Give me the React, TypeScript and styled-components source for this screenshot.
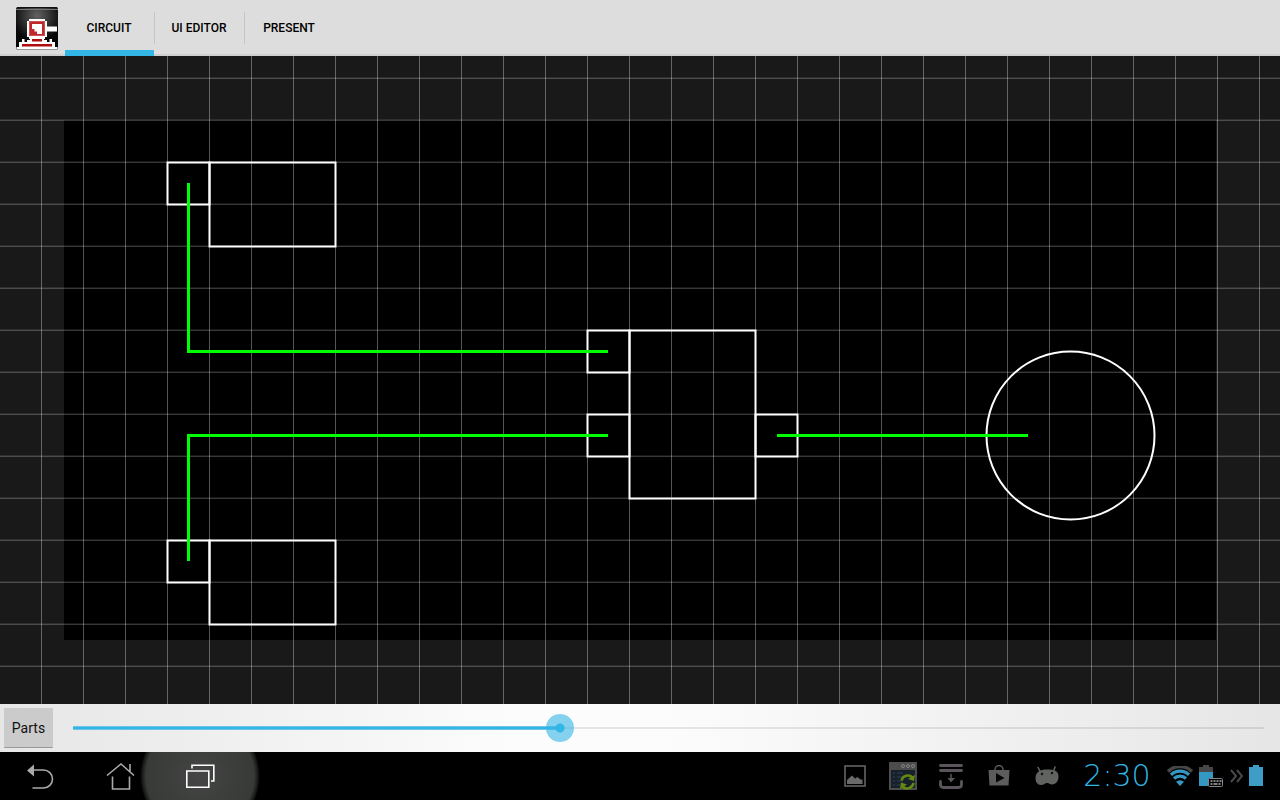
import React, { useState } from "react";
import styled, { createGlobalStyle } from "styled-components";

const GlobalStyle = createGlobalStyle`
  *, *::before, *::after { box-sizing: border-box; }
  body { margin: 0; background: #000; font-family: Roboto, "Liberation Sans", sans-serif; }
  button { font: inherit; border: 0; padding: 0; background: none; cursor: pointer; }
  svg { display: block; }
`;

const Screen = styled.div`
  display: flex;
  flex-direction: column;
  min-height: 100vh;
`;

const ActionBar = styled.header`
  display: flex;
  align-items: stretch;
  height: 56px;
  padding-left: 16px;
  background: linear-gradient(#cfcfcf, #cfcfcf) bottom / 100% 2px no-repeat #dddddd;
`;

const Logo = styled.div`
  display: flex;
  align-items: center;
  width: 49px;
`;

const Tabs = styled.nav`
  display: flex;
`;

const Tab = styled.button<{ $active?: boolean }>`
  position: relative;
  width: 90px;
  padding-right: 2px;
  color: #000;
  font-size: 12px;
  font-weight: 500;
  line-height: 16px;
  background: linear-gradient(#c6c6c6, #c6c6c6) right 12px / 1px 32px no-repeat;

  &:last-child { background: none; }

  &::after {
    content: "";
    display: ${(p) => (p.$active ? "block" : "none")};
    position: absolute;
    left: 0;
    right: 1px;
    bottom: 0;
    height: 6px;
    background: #33b5e5;
  }
`;

const Workspace = styled.main`
  position: relative;
  display: flex;
  flex: 1;
  min-height: 600px;
  padding: 64px;
  background: #191919;
`;

const Board = styled.div`
  flex: 1;
  background: #000;
`;

const Drawing = styled.svg`
  position: absolute;
  inset: 0;
  width: 100%;
  height: 100%;
`;

const ControlBar = styled.div`
  display: flex;
  align-items: center;
  height: 48px;
  padding: 0 2px 0 4px;
  gap: 6px;
  background: linear-gradient(90deg, #e6e6e6, #fcfcfc 40%, #fcfcfc 52%, #e6e6e6);
`;

const PartsButton = styled.button`
  width: 49px;
  height: 40px;
  color: #111;
  font-size: 14px;
  line-height: 20px;
  background: #cbcbcb;
  border-bottom: 1px solid #999;
  border-radius: 1px;
`;

const Slider = styled.input`
  flex: 1;
  min-width: 0;
  height: 28px;
  margin: 0;
  appearance: none;
  background: none;

  &::-webkit-slider-runnable-track {
    height: 28px;
    background:
      linear-gradient(#6cc5e8 1px, #33b5e5 1px, #33b5e5 3px, #6cc5e8 3px) 14px 12px / calc((100% - 28px) * var(--filled)) 4px no-repeat,
      linear-gradient(rgba(0, 0, 0, 0.09), rgba(0, 0, 0, 0.09)) 14px 13px / calc(100% - 28px) 2px no-repeat;
  }

  &::-webkit-slider-thumb {
    appearance: none;
    width: 28px;
    height: 28px;
    border-radius: 50%;
    background: radial-gradient(circle, #33b5e5 4px, rgba(51, 181, 229, 0.6) 5px);
  }
`;

const SystemBar = styled.footer`
  display: flex;
  justify-content: space-between;
  height: 48px;
  overflow: hidden;
  background: #000;
`;

const NavKeys = styled.nav`
  display: flex;
`;

const NavKey = styled.button<{ $pressed?: boolean }>`
  position: relative;
  display: flex;
  align-items: center;
  justify-content: center;
  width: 80px;

  &::before {
    content: "";
    display: ${(p) => (p.$pressed ? "block" : "none")};
    position: absolute;
    left: -20px;
    top: -36px;
    width: 120px;
    height: 120px;
    border-radius: 50%;
    background: radial-gradient(circle, #454545 0, #3e403e 24px, #383a38 54px, #181818 58px, #000 60px);
  }

  svg { position: relative; }
`;

const Status = styled.div`
  display: flex;
  align-items: center;
  padding-right: 17px;
`;

const Notices = styled.div`
  display: flex;
`;

const Notice = styled.div`
  display: flex;
  align-items: center;
  justify-content: center;
  width: 48px;
  height: 48px;
`;

const Clock = styled.time`
  width: 92px;
  color: #33b5e5;
  text-align: center;
  font-family: "DejaVu Sans", sans-serif;
  font-size: 30px;
  font-weight: 200;
  line-height: 48px;
`;

const Indicators = styled.div`
  display: flex;
  align-items: center;
  gap: 6px;
  padding-left: 4px;
`;

const LogoIcon = () => (
  <svg width="42" height="43" viewBox="0 0 42 43" aria-hidden="true">
    <defs>
      <radialGradient id="logoGlow" cx="0.5" cy="0.2" r="0.6">
        <stop offset="0" stopColor="#626262" />
        <stop offset="1" stopColor="#060606" />
      </radialGradient>
    </defs>
    <rect width="42" height="43" rx="2" fill="url(#logoGlow)" />
    <path d="M0 2.500h42" stroke="#777" />
    <path d="M1 .5h40" stroke="#111" />
    <g fill="#fff">
      <path d="M31 19.500h10v5H31z" />
      <path d="M13 12h16v2h2v16h-2v2H13v-2h-2V14h2z" />
      <path d="M14 31h14v2h3v2h2.500v-3H36v3h3v5h2.500v2.500H.5V40H3v-5h3v-3h2.500v3H11v-2h3z" />
    </g>
    <path fill="#c0282b" d="M13 14h16v15H13z" />
    <path fill="none" stroke="#cc5255" d="M13.500 14.500h15v14h-15z" />
    <path fill="#fff" d="M16 17h10v10h-5v-2.500h-2.500V22H16z" />
    <path fill="#b00d10" d="M16 32h10v2.500H16zM6 37h30v2.500H6z" />
    <path d="M1 42.500h40" stroke="#999" />
  </svg>
);

const BackIcon = () => (
  <svg width="28" height="28" viewBox="0 0 28 28" fill="none" stroke="#a9aba9" strokeWidth="1.600" aria-hidden="true">
    <path d="M7 8h10.500a9 9 0 0 1 0 18H6.500" />
    <path d="M1 8.500 8 2.500v12z" fill="#a9aba9" stroke="none" />
  </svg>
);

const HomeIcon = () => (
  <svg width="30" height="28" viewBox="0 0 30 28" fill="none" stroke="#a9aba9" strokeWidth="1.600" aria-hidden="true">
    <path d="M2 13.500 16 2l13 11.500M25 9.500V2M7.500 14.500V27h17V14.500" />
  </svg>
);

const RecentsIcon = () => (
  <svg width="30" height="26" viewBox="0 0 30 26" fill="none" stroke="#fff" strokeWidth="1.600" aria-hidden="true">
    <path d="M1.800 8h22v16.300h-22zM7 5.500V2.200h21.800V18H26" />
  </svg>
);

const PhotoNotice = () => (
  <svg width="22" height="22" viewBox="0 0 22 22" aria-hidden="true">
    <path fill="none" stroke="#6a6a6a" strokeWidth="1.500" d="M1 1h20v20H1z" />
    <path fill="#6a6a6a" d="M3 19v-4l5-4.500 3 3 2.500-1.500 3 2.500h2V19z" />
  </svg>
);

const SyncNotice = () => (
  <svg width="28" height="28" viewBox="0 0 28 28" aria-hidden="true">
    <path fill="#4c4c4c" d="M0 0h28v28H0z" />
    <path fill="#18202a" d="M2 8h24v18H2z" />
    <g fill="none" stroke="#858585">
      <circle cx="14" cy="4" r="1.500" />
      <circle cx="19" cy="4" r="1.500" />
      <circle cx="24" cy="4" r="1.500" />
    </g>
    <path stroke="#2c4258" strokeDasharray="2 2 6 20" d="M4 11h18M4 15h18M4 19h18M4 23h18" />
    <g fill="none" stroke="#658a12" strokeWidth="2.500">
      <path d="M12.500 18.500a6.500 6.500 0 0 1 11-3M24.500 21a6.500 6.500 0 0 1-11 3.500" />
    </g>
    <path fill="#658a12" d="m26 13-1 6-6-2zM11 27l1-6.500 6 2z" />
  </svg>
);

const DownloadNotice = () => (
  <svg width="24" height="26" viewBox="0 0 24 26" fill="none" stroke="#5a555a" strokeWidth="2.800" strokeLinecap="round" aria-hidden="true">
    <path d="M1.500 2.500h21M1.500 7.500h21M1.500 18.500v3q0 3 3 3h15q3 0 3-3v-3" />
    <path strokeWidth="1.500" d="M12 11.500v5" />
    <path fill="#5a555a" stroke="none" d="M8.500 15h7.500l-4 4.500z" />
  </svg>
);

const StoreNotice = () => (
  <svg width="22" height="22" viewBox="0 0 22 22" aria-hidden="true">
    <path fill="none" stroke="#666" strokeWidth="1.300" d="M7 6V4.500a4 4 0 0 1 8 0V6" />
    <path fill="#5c5c5c" d="M.5 5h21l-1 15.500h-19z" />
    <path fill="#050505" d="m8 8 8.500 5L8 17.500z" />
  </svg>
);

const DroidNotice = () => (
  <svg width="24" height="20" viewBox="0 0 24 20" aria-hidden="true">
    <path stroke="#676767" strokeWidth="1.500" strokeLinecap="round" d="m5 5-2-3.500M19 4l1-3" />
    <path fill="#606360" d="M.5 12C.5 6 5 3.500 12 3.500s11.500 1 11.500 7c0 5-3 8-6.500 8-2 0-3-1.500-5-1.500s-3 2-6 2c-3.500 0-5.500-3-5.500-7z" />
    <circle cx="7" cy="8" r="1.200" fill="#111" />
    <circle cx="17" cy="7" r="1.200" fill="#111" />
  </svg>
);

const WifiIcon = () => (
  <svg width="26" height="20" viewBox="0 0 26 20" fill="none" aria-hidden="true">
    <path stroke="#474747" strokeWidth="3.500" d="M1 5.500a17 17 0 0 1 24 0" />
    <g stroke="#3498c2" strokeWidth="3.200">
      <path d="M4 8.800a13 13 0 0 1 18 0" />
      <path d="M7 12.500a9 9 0 0 1 12 0" />
    </g>
    <path fill="#3498c2" d="M9 15.800q4-3 8 0L13 20z" />
  </svg>
);

const DockBatteryIcon = () => (
  <svg width="25" height="22" viewBox="0 0 25 22" aria-hidden="true">
    <path fill="#474747" d="M0 2h4V0h6v2h4v5H0z" />
    <path fill="#3498c2" d="M0 7h14v14H0z" />
    <rect x="9.500" y="13.500" width="14" height="8" rx="1" fill="#000" stroke="#85858f" />
    <path stroke="#aaa" strokeWidth="1.500" strokeDasharray="2 1" d="M11.500 16h11" />
    <path stroke="#aaa" strokeWidth="1.500" d="M11.500 19h2M14.500 19h4M19.500 19h2" />
  </svg>
);

const ChevronsIcon = () => (
  <svg width="13" height="14" viewBox="0 0 13 14" fill="none" stroke="#484848" strokeWidth="2" aria-hidden="true">
    <path d="m1 1 5 6-5 6M7 1l5 6-5 6" />
  </svg>
);

const BatteryIcon = () => (
  <svg width="14" height="22" viewBox="0 0 14 22" aria-hidden="true">
    <path fill="#3d9dc6" d="M0 2h4V0h6v2h4v19H0z" />
  </svg>
);

const TABS = ["CIRCUIT", "UI EDITOR", "PRESENT"];

const CircuitDrawing = () => (
  <Drawing role="img" aria-label="Circuit">
    <defs>
      <pattern id="grid" width="42" height="42" x="41" y="21" patternUnits="userSpaceOnUse">
        <path fill="#fff" fillOpacity="0.09" d="M0 0h42v1H0z" />
        <path fill="#fff" fillOpacity="0.22" d="M0 1h42v1H0z" />
        <path fill="#fff" fillOpacity="0.33" d="M0 0h1v42H0z" />
      </pattern>
    </defs>
    <rect width="100%" height="100%" fill="url(#grid)" />
    <g fill="none" stroke="#fff" strokeWidth="2">
      <rect x="167.500" y="106.500" width="42" height="42" />
      <rect x="209.500" y="106.500" width="126" height="84" />
      <rect x="167.500" y="484.500" width="42" height="42" />
      <rect x="209.500" y="484.500" width="126" height="84" />
      <rect x="587.500" y="274.500" width="42" height="42" />
      <rect x="587.500" y="358.500" width="42" height="42" />
      <rect x="629.500" y="274.500" width="126" height="168" />
      <rect x="755.500" y="358.500" width="42" height="42" />
      <circle cx="1070.500" cy="379.500" r="84" />
    </g>
    <g fill="none" stroke="#0f0" strokeWidth="3">
      <path d="M188.500 127v168.500H608" />
      <path d="M188.500 505V379.500H608" />
      <path d="M777 379.500h251" />
    </g>
  </Drawing>
);

export default function App() {
  const [tab, setTab] = useState(TABS[0]);
  const [position, setPosition] = useState(409);

  return (
    <Screen>
      <GlobalStyle />
      <ActionBar>
        <Logo>
          <LogoIcon />
        </Logo>
        <Tabs>
          {TABS.map((name) => (
            <Tab key={name} $active={name === tab} onClick={() => setTab(name)}>
              {name}
            </Tab>
          ))}
        </Tabs>
      </ActionBar>
      <Workspace>
        <Board />
        <CircuitDrawing />
      </Workspace>
      <ControlBar>
        <PartsButton>Parts</PartsButton>
        <Slider
          type="range"
          aria-label="Position"
          min={0}
          max={1000}
          value={position}
          onChange={(e) => setPosition(Number(e.target.value))}
          style={{ "--filled": position / 1000 } as React.CSSProperties}
        />
      </ControlBar>
      <SystemBar>
        <NavKeys>
          <NavKey aria-label="Back"><BackIcon /></NavKey>
          <NavKey aria-label="Home"><HomeIcon /></NavKey>
          <NavKey aria-label="Recent apps" $pressed><RecentsIcon /></NavKey>
        </NavKeys>
        <Status>
          <Notices>
            <Notice><PhotoNotice /></Notice>
            <Notice><SyncNotice /></Notice>
            <Notice><DownloadNotice /></Notice>
            <Notice><StoreNotice /></Notice>
            <Notice><DroidNotice /></Notice>
          </Notices>
          <Clock>2:30</Clock>
          <Indicators>
            <WifiIcon />
            <DockBatteryIcon />
            <ChevronsIcon />
            <BatteryIcon />
          </Indicators>
        </Status>
      </SystemBar>
    </Screen>
  );
}
